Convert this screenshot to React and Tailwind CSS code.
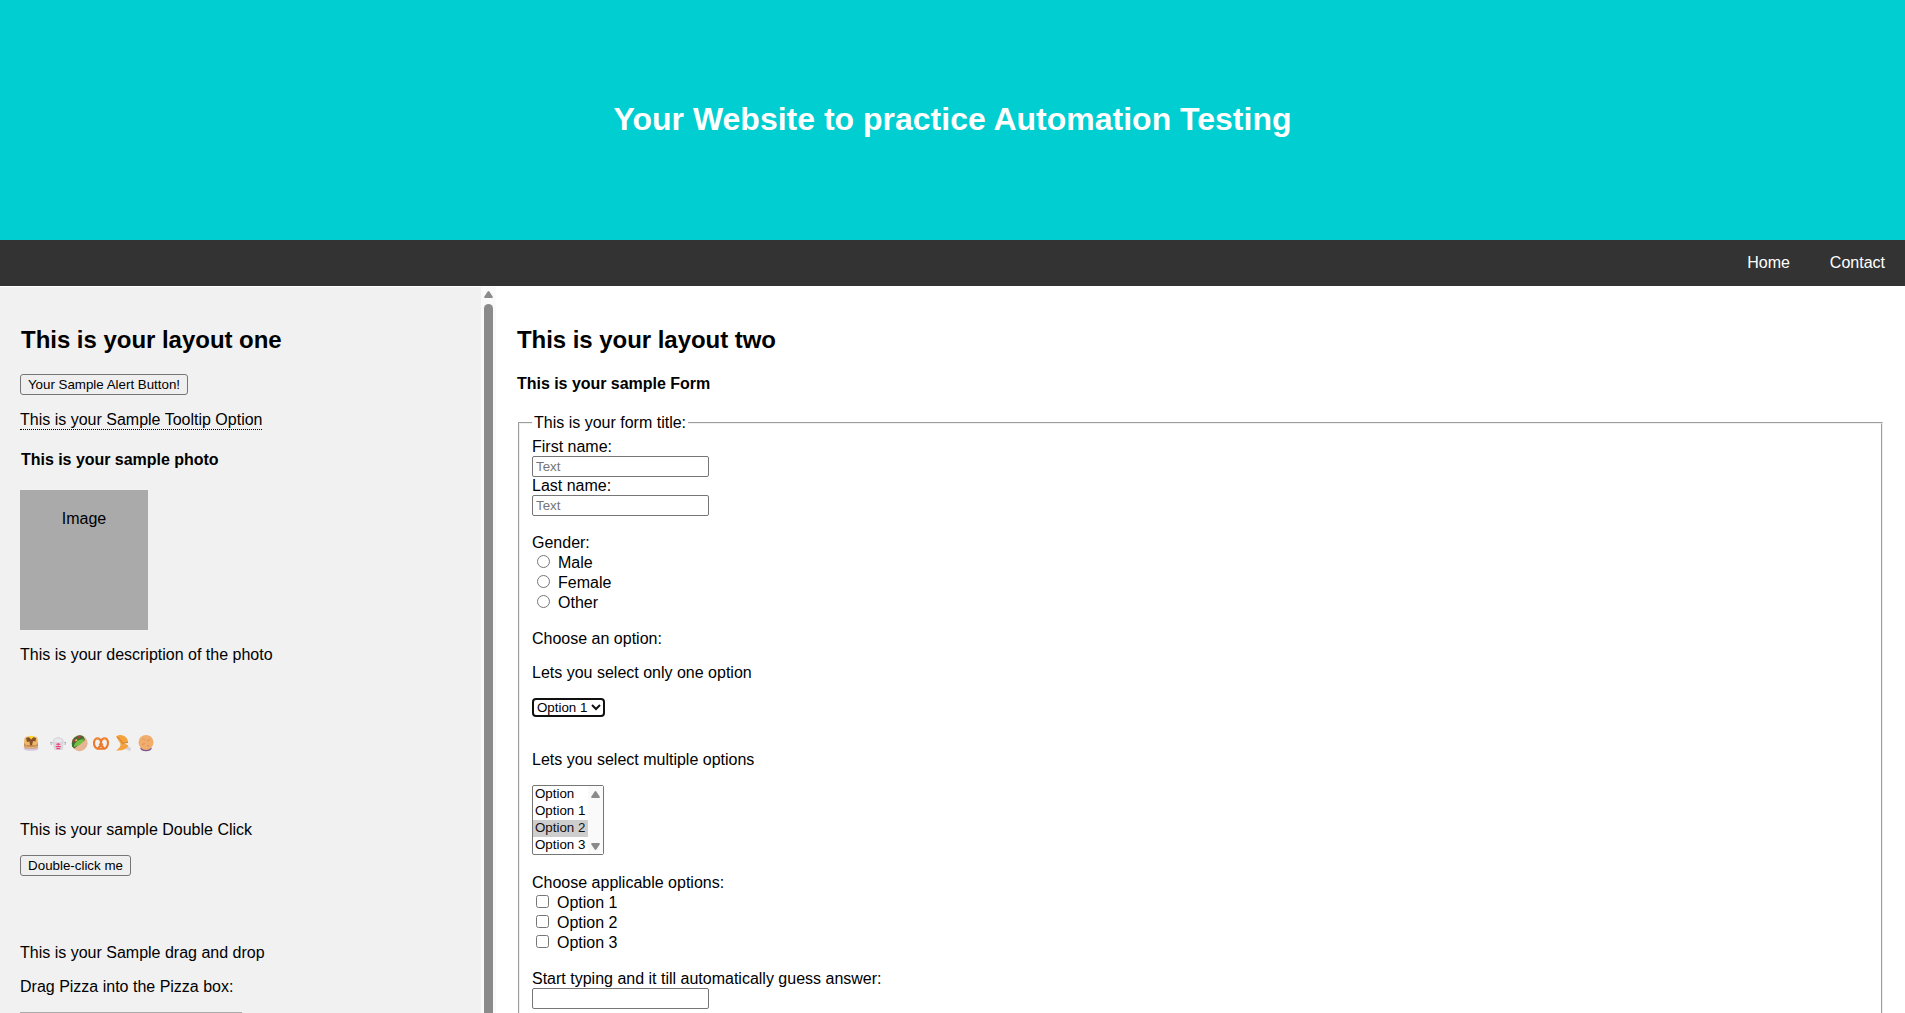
import React from "react";

const Gap = ({ className }) => <div className={"shrink-0 " + className} />;

const Emoji = ({ children, className }) => (
  <svg viewBox="0 0 18 18" className={"h-[18px] w-[18px] shrink-0 " + className}>{children}</svg>
);

const Line = ({ children, className = "" }) => (
  <p className={"h-[18px] shrink-0 whitespace-nowrap leading-[18px] " + className}>{children}</p>
);

const Button = ({ children, className }) => (
  <button
    className={
      "block h-[21px] shrink-0 whitespace-nowrap rounded-[3px] border border-[#767676] bg-[#efefef] text-center text-[13.333px] leading-[18px] " +
      className
    }
  >
    {children}
  </button>
);

const Field = ({ placeholder }) => (
  <input
    placeholder={placeholder}
    className="block h-[21px] w-[177px] shrink-0 rounded-[2px] border border-[#767676] bg-white px-[3px] py-0 text-[13.333px] leading-[17px] placeholder:text-[#757575]"
  />
);

const Radio = ({ label }) => (
  <label className="flex h-5 pl-[5px] leading-[18px]">
    <span className="mt-[1px] h-[13px] w-[13px] rounded-full border border-[#767676] bg-white" />
    <span className="ml-2">{label}</span>
  </label>
);

const Check = ({ label }) => (
  <label className="flex h-5 pl-[4px] leading-[18px]">
    <span className="mt-[1px] h-[13px] w-[13px] rounded-[2.5px] border border-[#767676] bg-white" />
    <span className="ml-2">{label}</span>
  </label>
);

function Sidebar() {
  return (
    <aside className="flex w-[481px] shrink-0 flex-col items-start overflow-hidden bg-[#f1f1f1] pl-5 pt-[39px]">
      <h2 className="ml-px h-[27px] shrink-0 text-2xl leading-[27px] font-bold tracking-[-0.03px]">This is your layout one</h2>
      <Gap className="h-[21px]" />
      <Button className="w-[168px]">Your Sample Alert Button!</Button>
      <Gap className="h-4" />
      <p className="h-[19px] shrink-0 border-b border-dotted border-black leading-[18px]">This is your Sample Tooltip Option</p>
      <Gap className="h-[21px]" />
      <h4 className="ml-px h-[18px] shrink-0 leading-[18px] font-bold tracking-[-0.03px]">This is your sample photo</h4>
      <Gap className="h-[21px]" />
      <div className="h-[140px] w-32 shrink-0 bg-[#aaa] pt-5 text-center leading-[18px]">Image</div>
      <Gap className="h-4" />
      <Line>This is your description of the photo</Line>
      <Gap className="h-[70px]" />
      <div className="flex h-[18px] shrink-0">
        <Emoji className="ml-[2px]">
          <ellipse cx="9" cy="14.5" rx="7.5" ry="2.3" fill="#d5c6e0" />
          <rect x="2" y="7" width="14" height="7.5" rx="3" fill="#c98f58" />
          <path d="M3 12.5Q9 15 15 12.5" fill="none" stroke="#e8b87c" strokeWidth="1.2" />
          <rect x="2.2" y="2.6" width="13.6" height="8.4" rx="3.6" fill="#eeb864" />
          <path d="M4 4Q9 2 14 4L13.5 7.5 11 7 10 11.5 8 11 7.5 7.5 5 8Z" fill="#85502a" />
          <path d="M6.5 2.6Q9 .8 11.8 2.8L9.2 5.4Z" fill="#ffd52e" />
        </Emoji>
        <Emoji className="ml-[9px]">
          <path d="M4 9 1.6 8.2 2.4 11M14.5 9l2.2-.8L16 11" fill="none" stroke="#b5b1bb" />
          <path d="M3.8 8Q3.6 4 6.8 4Q9.5 1.6 11.6 4Q14.8 4 14.8 8L13.8 16H5Z" fill="#d9d9df" />
          <path d="M5 6Q9 3 13 6L12 8H6Z" fill="#e8e8ed" />
          <path d="M7.2 10.2h4.2M9.3 9v2.6M6.8 12.6h5M7.4 14.6h3.8" stroke="#ec4278" strokeWidth="1.1" />
        </Emoji>
        <Emoji className="ml-[3px]">
          <circle cx="9.6" cy="9.2" r="8" fill="#e6b593" />
          <path d="M2 12.5Q1 4 7 2Q10 .4 13.5 2.4L15 6 4.2 14.6Z" fill="#3f6f30" />
          <path d="M3 8l2.4-2.2M7.4 3.4l3.2-.6" stroke="#b83a4a" strokeWidth="2" />
          <path d="M3.6 13Q5 5.6 14 5Q13.8 10 3.6 13Z" fill="#72c343" />
          <path d="M5.4 6.6l1.8-.8" stroke="#f3c84b" strokeWidth="1.5" />
        </Emoji>
        <Emoji className="ml-[4px]">
          <path d="M5.4 14.8Q1.8 13 2 8.2Q3 4 6.4 4.4Q9 5.2 9 8.4Q9 5.2 11.6 4.4Q15.4 4 16 8.2Q16 13 12.6 14.8H5.4ZM6.2 14 10.6 9.4M11.8 14 7.4 9.4" fill="none" stroke="#ea7a2c" strokeWidth="2.1" strokeLinejoin="round" />
          <path d="M3 7Q4 4.6 6.4 4.6M11.6 4.6Q14 4.6 15 7" fill="none" stroke="#ffad58" strokeWidth=".8" />
        </Emoji>
        <Emoji className="ml-[4px]">
          <path d="m12.5 11.5 4.5 2.6-.8 3.2-4-1.6Z" fill="#d5d4e0" />
          <path d="M2 2.4Q7-.4 11.4 2.8Q14 5 14.4 8.4L9.4 9 14.6 11.4Q12 17 2 16.4Q7.4 13 6.4 9.4Z" fill="#f3a23d" />
          <path d="M3 3Q7 5 8.6 9.4L14 8.4" fill="none" stroke="#ce7e27" strokeWidth="1" />
        </Emoji>
        <Emoji className="ml-[5px]">
          <ellipse cx="9" cy="14.4" rx="5.6" ry="2.8" fill="#7b568c" />
          <circle cx="9" cy="8.4" r="7.5" fill="#f0ad6c" />
          <path d="m6 4.4 2 2m2 .6 3-1.6M5 10.4l3-.8m2 2 2.4.6" stroke="#df8858" strokeWidth=".9" />
        </Emoji>
      </div>
      <Gap className="h-[69px]" />
      <Line>This is your sample Double Click</Line>
      <Gap className="h-4" />
      <Button className="w-[111px]">Double-click me</Button>
      <Gap className="h-[68px]" />
      <Line>This is your Sample drag and drop</Line>
      <Gap className="h-4" />
      <Line>Drag Pizza into the Pizza box:</Line>
      <Gap className="h-4" />
      <div className="h-[70px] w-[222px] shrink-0 border border-[#aaa]" />
    </aside>
  );
}

function ScrollRail() {
  return (
    <div className="flex w-[15px] shrink-0 flex-col items-center bg-[#fafafa] pt-[4px]">
      <svg viewBox="0 0 9 7" className="h-[7px] w-[9px] shrink-0">
        <path d="M4.5 0Q5 0 5.5.8L8.8 5.8Q9 7 8 7H1Q0 7 .2 5.8L3.5.8Q4 0 4.5 0Z" fill="#8b8b8b" />
      </svg>
      <div className="mt-[6px] w-[9px] flex-1 rounded-t-full bg-[#8b8b8b]" />
    </div>
  );
}

function SampleForm() {
  return (
    <main className="flex min-w-0 flex-1 flex-col overflow-hidden pt-[39px] pr-[22px] pl-[22px]">
      <h2 className="-ml-px h-[27px] shrink-0 text-2xl leading-[27px] font-bold tracking-[-0.05px]">This is your layout two</h2>
      <Gap className="h-[22px]" />
      <h4 className="-ml-px h-[18px] shrink-0 leading-[18px] font-bold tracking-[-0.03px]">This is your sample Form</h4>
      <Gap className="h-[21px]" />
      <fieldset className="h-[700px] shrink-0 border-2 border-[#f0f0f0] px-[12px] [border-style:groove]">
        <legend className="h-[18px] px-[2px] leading-[18px]">This is your form title:</legend>
        <Gap className="h-[6px]" />
        <Line>First name:</Line>
        <Field placeholder="Text" />
        <Line>Last name:</Line>
        <Field placeholder="Text" />
        <Gap className="h-[18px]" />
        <Line>Gender:</Line>
        <Gap className="h-[2px]" />
        <Radio label="Male" />
        <Radio label="Female" />
        <Radio label="Other" />
        <Gap className="h-4" />
        <Line>Choose an option:</Line>
        <Gap className="h-4" />
        <Line>Lets you select only one option</Line>
        <Gap className="h-4" />
        <div className="flex h-[19px] w-[73px] items-center rounded-[4px] border-2 border-[#101010] bg-white pl-[3px] text-[13.333px] leading-[15px]">
          Option 1
          <svg viewBox="0 0 10 7" className="ml-[4px] h-[7px] w-[10px]">
            <path d="m1 1 4 4 4-4" fill="none" stroke="#111" strokeWidth="2" />
          </svg>
        </div>
        <Gap className="h-[34px]" />
        <Line>Lets you select multiple options</Line>
        <Gap className="h-4" />
        <div className="flex h-[70px] w-[72px] rounded-[2px] border border-[#767676] bg-white text-[13.333px] leading-[15px]">
          <div className="w-[55px] whitespace-nowrap">
            <div className="h-[17px] pl-[2px]">Option</div>
            <div className="h-[17px] pl-[2px]">Option 1</div>
            <div className="h-[17px] bg-[#cecece] pl-[2px] text-[#101010]">Option 2</div>
            <div className="h-[17px] pl-[2px]">Option 3</div>
          </div>
          <div className="flex flex-1 flex-col items-center justify-between bg-[#fafafa] pt-[5px] pb-[4px]">
            <svg viewBox="0 0 9 7" className="h-[7px] w-[9px]">
              <path d="M4.5 0Q5 0 5.5.8L8.8 5.8Q9 7 8 7H1Q0 7 .2 5.8L3.5.8Q4 0 4.5 0Z" fill="#8b8b8b" />
            </svg>
            <svg viewBox="0 0 9 7" className="h-[7px] w-[9px] rotate-180">
              <path d="M4.5 0Q5 0 5.5.8L8.8 5.8Q9 7 8 7H1Q0 7 .2 5.8L3.5.8Q4 0 4.5 0Z" fill="#8b8b8b" />
            </svg>
          </div>
        </div>
        <Gap className="h-[19px]" />
        <Line>Choose applicable options:</Line>
        <Gap className="h-[2px]" />
        <Check label="Option 1" />
        <Check label="Option 2" />
        <Check label="Option 3" />
        <Gap className="h-4" />
        <Line>Start typing and it till automatically guess answer:</Line>
        <Field />
      </fieldset>
    </main>
  );
}

export default function App() {
  return (
    <div className="flex h-[1013px] w-[1905px] flex-col overflow-hidden bg-white font-['Liberation_Sans',Arial,sans-serif] text-base text-black">
      <header className="flex h-60 shrink-0 items-center justify-center bg-[#00ced1] pb-[2px]">
        <h1 className="text-[32px] leading-[37px] font-bold whitespace-nowrap text-white">Your Website to practice Automation Testing</h1>
      </header>
      <nav className="flex h-[46px] shrink-0 justify-end bg-[#333] leading-[18px] text-white">
        <a className="px-5 py-[14px]">Home</a>
        <a className="px-5 py-[14px]">Contact</a>
      </nav>
      <div className="mt-px flex min-h-0 flex-1">
        <Sidebar />
        <ScrollRail />
        <SampleForm />
      </div>
    </div>
  );
}
